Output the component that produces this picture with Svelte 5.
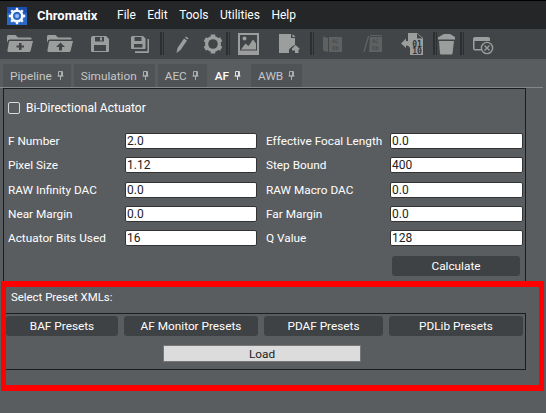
<script>
  const menus = ['File', 'Edit', 'Tools', 'Utilities', 'Help'];
  const tabs = ['Pipeline', 'Simulation', 'AEC', 'AF', 'AWB'];
  const rows = [
    ['F Number', '2.0', 'Effective Focal Length', '0.0'],
    ['Pixel Size', '1.12', 'Step Bound', '400'],
    ['RAW Infinity DAC', '0.0', 'RAW Macro DAC', '0.0'],
    ['Near Margin', '0.0', 'Far Margin', '0.0'],
    ['Actuator Bits Used', '16', 'Q Value', '128']
  ];
  const presets = ['BAF Presets', 'AF Monitor Presets', 'PDAF Presets', 'PDLib Presets'];
</script>

{#snippet pin()}
  <svg class="pin" width="7" height="9" viewBox="0 0 7 9"><path d="M1.500 .5h4v4.500h-4zM.5 5h6M3.500 5v4M4.500 1v4" fill="none" stroke="currentColor" stroke-width="1"/></svg>
{/snippet}

<div class="app">
  <header class="title">
    <svg class="logo" width="20" height="18" viewBox="0 0 20 18">
      <rect width="20" height="18" fill="#2a68c8"/>
      <rect width="20" height="6" fill="#1a4fb0"/>
      <g fill="none" stroke="#f4f8ff">
        <circle cx="10" cy="9" r="5.300" stroke-width="2.600"/>
        <path d="M10 .8v3.500M10 13.700v3.500M1.800 9h3.500M14.700 9h3.500M4.200 3.200l2.400 2.400M13.400 12.400l2.400 2.400M15.800 3.200l-2.400 2.400M6.600 12.400l-2.400 2.400" stroke-width="2.300"/>
      </g>
      <circle cx="10" cy="9" r="2" fill="#9dbdf0"/>
    </svg>
    <span class="brand">Chromatix</span>
    <nav class="menu">
      {#each menus as m}<span>{m}</span>{/each}
    </nav>
  </header>

  <div class="toolbar">
    <svg class="ic" width="40" height="30" viewBox="0 0 40 30">
      <path d="M7 7.500q0-1.500 1.500-1.500h7l2.500 2.500h12.500q1 0 1 1v1H10q-2 0-2.500 2L7 14z"/>
      <path d="M10 12h23l-2.500 10q-.2 1-1.500 1H8.500q-1.500 0-1-2L9 13q.2-1 1-1z"/>
      <path class="cut" d="M19 14h2.500v2.500H24v2h-2.500V21H19v-2.500h-2.500v-2H19z"/>
    </svg>
    <svg class="ic" width="44" height="30" viewBox="40 0 44 30">
      <path d="M47 7.500q0-1.500 1.500-1.500h7l2.500 2.500h12.500q1 0 1 1v1H50q-2 0-2.500 2L47 14z"/>
      <path d="M50 12h23l-2.500 10q-.2 1-1.500 1H48.500q-1.500 0-1-2L49 13q.2-1 1-1z"/>
      <path class="cut" d="M60.500 13.500l4.500 4.500h-3v3.500h-3V18h-3z"/>
    </svg>
    <svg class="ic" width="40" height="30" viewBox="84 0 40 30">
      <path fill-rule="evenodd" d="M91 9q0-2 2-2h13l3 3v12q0 1-1 1H92q-1 0-1-1zM95 8v4.500h9V8zM94 16v6h12v-6z"/>
      <path d="M100 8.500h2v3h-2z"/>
    </svg>
    <svg class="ic" width="36" height="30" viewBox="124 0 36 30">
      <path fill-rule="evenodd" d="M131 8.500q0-1.500 1.500-1.500h10.500l2.500 2.500v9.500q0 1-1 1h-12.500q-1 0-1-1zM134.500 8v4h7V8zM134 15v3.500h8.500V15z"/>
      <path d="M147.500 10h1.500v13q0 1-1 1H135v-1.800h12.500z"/>
    </svg>
    <i class="sep"></i>
    <svg class="ic" width="34" height="30" viewBox="164 0 34 30">
      <path d="M176.500 24l1-5 6.500-9.500 3 2-6.500 9.500z"/>
      <path d="M185 8.500l1-1 2.500 1.700-1 1.300z"/>
    </svg>
    <svg class="ic" width="28" height="30" viewBox="198 0 28 30">
      <path d="M213 5.500v19M204.800 10.200l16.400 9.600M204.800 19.800l16.400-9.600" stroke="#9c9e9e" stroke-width="4.500"/>
      <circle cx="213" cy="15" r="8"/>
      <circle class="cut" cx="213" cy="15" r="4.800"/>
    </svg>
    <i class="sep"></i>
    <svg class="ic" width="44" height="30" viewBox="230 0 44 30">
      <path fill-rule="evenodd" d="M238 4h21v22h-21zM240 6v15.500h17V6z"/>
      <path d="M241 20.500l4.500-6 3 2.500 4.500-6.500 3 4v6z"/>
      <circle cx="244.500" cy="9.500" r="2"/>
    </svg>
    <svg class="ic" width="36" height="30" viewBox="274 0 36 30">
      <path d="M279 5h12v4h4v7l-3 1.500-3 3v3.500h-10z"/>
      <path d="M292.500 5l3 3h-3z"/>
      <path d="M295.500 16l4.500 4-1.500 .6v3.400h-3.500v-2.500h-3v-2z"/>
    </svg>
    <i class="sep"></i>
    <svg class="ic dim" width="40" height="30" viewBox="314 0 40 30">
      <path d="M323 7.500l5 1.500v14l-5-1.500z"/>
      <path d="M329 8h13v15h-13z"/>
      <text class="mini" x="335.500" y="14">AC</text>
      <text class="mini" x="335.500" y="21">Db</text>
    </svg>
    <svg class="ic dim" width="42" height="30" viewBox="354 0 42 30">
      <path d="M363 23l5-16h1.500l-5 16z"/>
      <path d="M370 8h12v15h-13z"/>
      <path d="M370 6h12v1h-12z"/>
      <text class="mini" x="375.500" y="14">AC</text>
      <text class="mini" x="375.500" y="21">Db</text>
    </svg>
    <svg class="ic" width="37" height="30" viewBox="396 0 37 30">
      <path d="M408 4h9l6 5v17h-13v-7c-.5-1.500-2-2.500-4-2.500v2.500L401 14.500l5-5v2.500c.7 0 1.400 0 2 .2z"/>
      <path class="cut" d="M417 4.500v5h5.500z"/>
      <text class="bits" x="417" y="17.500">01</text>
      <text class="bits" x="417" y="25">10</text>
    </svg>
    <i class="sep"></i>
    <svg class="ic" width="23" height="30" viewBox="437 0 23 30">
      <path d="M438 8.500l5-3 1-.5h6l5 3v2.500h-17z"/>
      <path d="M439 12h15l-1.500 12.500q-.2 1-1 1h-10.500q-.8 0-1-1z"/>
    </svg>
    <i class="sep"></i>
    <svg class="ic" width="36" height="30" viewBox="464 0 36 30">
      <path d="M475 8h13q2 0 2 2v2h-15.500v8h9v1.500H475q-2 0-2-2V10q0-2 2-2z"/>
      <circle cx="487" cy="19" r="5.600" fill="#424547" stroke="#9c9e9e" stroke-width="1.400"/>
      <path d="M484.500 16.500l5 5M489.500 16.500l-5 5" stroke="#9c9e9e" stroke-width="1.300"/>
    </svg>
  </div>

  <div class="tabs">
    {#each tabs as t}
      <div class="tab" class:active={t === 'AF'}><span class="tab-text">{t}</span>{@render pin()}</div>
    {/each}
  </div>

  <main class="panel">
    <label class="check"><span class="box"></span>Bi-Directional Actuator</label>
    <div class="grid">
      {#each rows as r}
        <span class="lbl">{r[0]}</span><input value={r[1]} />
        <span class="lbl second">{r[2]}</span><input value={r[3]} />
      {/each}
    </div>
    <div class="calc"><button>Calculate</button></div>
  </main>

  <section class="xml">
    <div class="heading">Select Preset XMLs:</div>
    <div class="group">
      <div class="presets">
        {#each presets as p}<button>{p}</button>{/each}
      </div>
      <div class="load"><button>Load</button></div>
    </div>
  </section>

  <div class="highlight"></div>
</div>

<style>
  :global(body) { margin: 0; background: #5a5d60; }
  .app {
    position: relative; width: 546px; height: 413px; overflow: hidden;
    background: #5a5d60; color: #fff;
    font: 11.8px Roboto, "Open Sans", sans-serif;
  }
  .title {
    height: 28px; display: flex; align-items: center; background: #252628;
    border-top: 1px solid #000; padding-left: 7px;
  }
  .logo { flex: none; margin-top: 2px; }
  .brand { margin-left: 10px; font-weight: 700; font-size: 13px; width: 80px; }
  .menu { display: flex; gap: 11.5px; font-size: 12px; }
  .toolbar { height: 30px; display: flex; background: #424547; }
  .ic { flex: none; fill: #9c9e9e; }
  .ic.dim { fill: #5e6162; }
  .cut { fill: #424547; }
  .mini { font: 5.500px "DejaVu Sans Mono", monospace; fill: #424547; text-anchor: middle; }
  .bits { font: bold 8px "DejaVu Sans Mono", monospace; fill: #333638; text-anchor: middle; }
  .sep {
    flex: none; width: 4px; height: 23px; margin-top: 3px; box-sizing: border-box;
    border-left: 2px solid #2c2e30; border-right: 1px solid #2c2e30;
  }
  .tabs {
    height: 29px; display: flex; gap: 3px; padding: 5px 0 0 3px; margin-right: 3px;
    box-sizing: border-box; border-bottom: 1px solid #85888a;
  }
  .tab {
    height: 23px; display: flex; align-items: center; padding: 0 7px 0 7px;
    background: #505356; color: #c4c6c7;
  }
  .tab:nth-child(2) { padding-right: 6px; }
  .tab:nth-child(3) { padding-right: 8px; }
  .tab-text { margin-right: 5px; }
  .tab.active { background: #5a5d60; color: #fff; font-weight: 500; margin-left: -3px; padding-left: 8px; }
  .pin { opacity: .8; }
  .panel {
    height: 194px; margin-left: 3px; width: 523px; box-sizing: border-box;
    border: 1px solid #1c1d1e; border-bottom: 0;
    padding: 10px 4px 0 4px;
  }
  .check { display: flex; align-items: center; gap: 6px; height: 18px; font-size: 12px; }
  .box { width: 10px; height: 10px; border: 1px solid #d8d8d8; border-radius: 2px; }
  .grid {
    margin-top: 16px; display: grid; grid-template-columns: 117px 132px 133px 133px;
    grid-auto-rows: 16px; row-gap: 8.25px; align-items: center; white-space: nowrap;
  }
  .second { padding-left: 9px; }
  input {
    height: 16px; box-sizing: border-box; width: 100%; border: 1px solid #333; border-radius: 2px;
    background: #fff; color: #222; font: 12px Roboto, sans-serif; padding: 0 1px; margin: 0; outline: 0;
  }
  .calc { display: flex; justify-content: flex-end; margin-top: 10px; padding-right: 1px; }
  button {
    border: 0; border-radius: 3px; background: #3f4244; color: #fff;
    font: 11.8px Roboto, sans-serif; padding: 0; height: 20px;
  }
  .calc button { width: 128px; }
  .xml { padding: 0 0 0 6px; }
  .heading { padding: 8px 0 0 5px; height: 31px; box-sizing: border-box; font-size: 11.4px; }
  .group { width: 520px; height: 57px; box-sizing: border-box; border: 1px solid #1c1d1e; border-left: 0; }
  .presets { display: flex; gap: 6px; padding-top: 2px; }
  .presets button:nth-child(1) { width: 112px; }
  .presets button:nth-child(2) { width: 134px; }
  .presets button:nth-child(3) { width: 119px; }
  .presets button:nth-child(4) { width: 134px; }
  .load { padding: 9px 0 0 157px; }
  .load button { width: 198px; height: 17px; background: #dcdcdc; color: #222; border-radius: 0; border: 1px solid #777; box-sizing: border-box; }
  .highlight {
    position: absolute; left: 1px; top: 281px; width: 543px; height: 110px;
    box-sizing: border-box; border: solid #fe0000; border-width: 6px 5px;
  }
</style>
